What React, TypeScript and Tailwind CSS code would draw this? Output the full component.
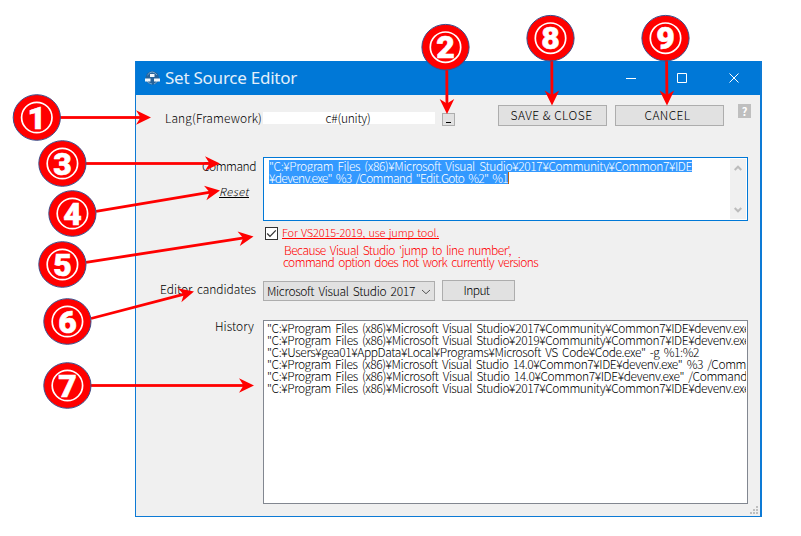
import { useLayoutEffect, useRef, useState } from "react";
import type { ReactNode } from "react";

// Single-line text whose letter spacing is adjusted to fill the given width.
function Fit({ text, width, className = "" }: { text: string; width: number; className?: string }) {
  const ref = useRef<HTMLSpanElement>(null);
  const [spacing, setSpacing] = useState(0);
  useLayoutEffect(() => {
    if (!ref.current) return;
    const natural = ref.current.getBoundingClientRect().width;
    setSpacing((width - natural) / text.length);
  }, [text, width]);
  return (
    <span ref={ref} className={`inline-block whitespace-pre ${className}`} style={{ letterSpacing: spacing }}>
      {text}
    </span>
  );
}

function PushButton({ children, className = "" }: { children: ReactNode; className?: string }) {
  return (
    <button className={`flex h-[21px] items-center justify-center border border-[#adadad] bg-[#e1e1e1] ${className}`}>
      {children}
    </button>
  );
}

const ROOT = '"C:¥Program Files (x86)¥Microsoft Visual Studio';

const history = [
  { text: `${ROOT}¥2017¥Community¥Common7¥IDE¥devenv.exe`, width: 483 },
  { text: `${ROOT}¥2019¥Community¥Common7¥IDE¥devenv.exe`, width: 483 },
  { text: '"C:¥Users¥gea01¥AppData¥Local¥Programs¥Microsoft VS Code¥Code.exe" -g %1:%2', width: 432 },
  { text: `${ROOT} 14.0¥Common7¥IDE¥devenv.exe" %3 /Comm`, width: 479 },
  { text: `${ROOT} 14.0¥Common7¥IDE¥devenv.exe" /Command`, width: 480 },
  { text: `${ROOT}¥2017¥Community¥Common7¥IDE¥devenv.exe`, width: 483 },
];

const callouts = [
  { n: 1, cx: 36.8, cy: 117.5, from: [60, 117.5], to: [151, 117.5] },
  { n: 2, cx: 445.5, cy: 47.2, from: [446.8, 70], to: [447, 114] },
  { n: 3, cx: 62.4, cy: 163.5, from: [86, 163.5], to: [220, 163.5] },
  { n: 4, cx: 72.4, cy: 213.5, from: [96, 211.3], to: [220, 190.5] },
  { n: 5, cx: 62.4, cy: 264.5, from: [86, 262.3], to: [253.5, 236.5] },
  { n: 6, cx: 67.4, cy: 321.5, from: [91, 318.5], to: [194, 291.5] },
  { n: 7, cx: 67.4, cy: 385.5, from: [91, 385.5], to: [254, 385.5] },
  { n: 8, cx: 550.5, cy: 38.2, from: [551.8, 60], to: [552, 105.5] },
  { n: 9, cx: 665.5, cy: 38.2, from: [666.6, 60], to: [667, 105.5] },
];

function Callouts() {
  return (
    <svg className="pointer-events-none absolute inset-0" width="801" height="536" viewBox="0 0 801 536">
      {callouts.map(({ n, cx, cy, from, to }) => {
        const dx = to[0] - from[0];
        const dy = to[1] - from[1];
        const length = Math.hypot(dx, dy);
        const angle = (Math.atan2(dy, dx) * 180) / Math.PI;
        return (
          <g key={n}>
            <g transform={`translate(${from[0]} ${from[1]}) rotate(${angle})`} fill="#f00">
              <rect x="0" y="-1.4" width={length - 8} height="2.8" />
              <path d={`M${length} 0l-15 -7.3l4.5 7.3l-4.5 7.3z`} />
            </g>
            <ellipse cx={cx} cy={cy} rx="23.6" ry="22.8" fill="#f00" stroke="#3a4f8c" strokeWidth="1" />
            <circle cx={cx} cy={cy} r="15.2" fill="none" stroke="#fff" strokeWidth="1.7" />
            <text
              x={cx}
              y={cy + 11.2}
              textAnchor="middle"
              fill="#fff"
              stroke="#fff"
              strokeWidth="0.6"
              className="font-['Roboto','Liberation_Sans',sans-serif] text-[32px] font-black"
            >
              {n}
            </text>
          </g>
        );
      })}
    </svg>
  );
}

export default function App() {
  return (
    <div className="relative h-[536px] w-[801px] overflow-hidden bg-white pl-[135px] pt-[61px] font-['Noto_Sans_CJK_JP',sans-serif] text-[12px] font-light leading-[12px] text-black">
      <div className="flex h-[456px] w-[627px] flex-col border-b border-l border-r-2 border-[#0d7ad5] bg-[#f0f0f0]">
        <header className="flex h-[34px] shrink-0 items-center bg-[#0078d7] pl-2 text-white">
          <svg width="17" height="16" viewBox="0 0 17 16">
            <circle cx="8.3" cy="8" r="6.8" fill="#26639b" />
            <path d="M3.5 5Q8 -1 13 5M2 9Q3 13.5 8 14M14 9Q13 13 10 14" fill="none" stroke="#78a8cd" />
            <path d="M6 4h4.5v3H6zM1 8.5h5.5v3H1zM10 8.5h6v3h-6z" fill="#f2f8fc" />
          </svg>
          <h1 className="ml-1 font-['Noto_Sans',sans-serif] text-[17px] font-normal leading-[24px] text-[#e3effa]">
            <Fit text="Set Source Editor" width={132} />
          </h1>
          <svg className="ml-auto mr-[19px]" width="116" height="12" viewBox="0 0 116 12" fill="none" stroke="#fff">
            <path d="M1 6.5h10M52.5 1.5h9v9h-9zM104.5 1.5l9 9M113.5 1.5l-9 9" />
          </svg>
        </header>

        <div className="flex h-[62px] shrink-0 items-start pt-[9px]">
          <div className="mt-[8px] w-[127px] pl-[29px]">
            <Fit text="Lang(Framework)" width={97} />
          </div>
          <div className="mt-2 flex h-3 w-[172px] justify-center bg-white pr-[2px]">
            <Fit text="c#(unity)" width={45} />
          </div>
          <button className="ml-[7px] mt-[9px] flex h-[13px] w-[13px] items-end justify-center border border-[#adadad] bg-[#e1e1e1] pb-[2px]">
            <span className="h-px w-[5px] bg-black" />
          </button>
          <PushButton className="ml-[43px] mt-px w-[109px] pb-[2px] pr-[2px]">
            <Fit text="SAVE & CLOSE" width={82} />
          </PushButton>
          <PushButton className="ml-2 mt-px w-[109px] pb-[2px] pr-1">
            <Fit text="CANCEL" width={46} />
          </PushButton>
          <span className="ml-[14px] flex h-[14px] w-[13px] items-center justify-center bg-[#bfbfbf] text-[11px] font-bold text-white">
            ?
          </span>
        </div>

        <div className="flex h-[70px] shrink-0">
          <div className="flex w-[127px] flex-col items-end pt-[3px]">
            <Fit text="Command" width={54} className="mr-[7px]" />
            <a className="mr-[14px] mt-[14px] h-[12px] border-b border-black text-[11px] italic leading-[11px]">
              <Fit text="Reset" width={30} />
            </a>
          </div>
          <div className="flex h-[64px] w-[485px] border border-[#0078d7] bg-white">
            <div className="flex flex-1 flex-col items-start pl-[5px] pt-[2px] text-white">
              <span className="flex h-3 bg-[#3399ff]">
                <Fit className="[word-spacing:2px]" text={`${ROOT}¥2017¥Community¥Common7¥IDE`} width={423} />
              </span>
              <span className="flex h-3 border-r border-[#b86010] bg-[#3399ff]">
                <Fit className="[word-spacing:2px]" text={'¥devenv.exe" %3 /Command "Edit.Goto %2" %1'} width={239} />
              </span>
            </div>
            <div className="mr-px mt-px flex h-[60px] w-4 flex-col items-center justify-between bg-[#f0f0f0] py-[6px]">
              <svg width="8" height="6" viewBox="0 0 8 6" fill="none" stroke="#bcbcbc" strokeWidth="2">
                <path d="M.7 5L4 1.7L7.3 5" />
              </svg>
              <svg width="8" height="6" viewBox="0 0 8 6" fill="none" stroke="#bcbcbc" strokeWidth="2">
                <path d="M.7 1L4 4.3L7.3 1" />
              </svg>
            </div>
          </div>
        </div>

        <div className="flex h-[17px] shrink-0 pl-[129px]">
          <span className="flex h-[13px] w-[13px] items-center justify-center border border-[#333] bg-white">
            <svg width="11" height="11" viewBox="0 0 11 11" fill="none" stroke="#333" strokeWidth="1.3">
              <path d="M1.2 5.5L4 8.4L9.8 2.4" />
            </svg>
          </span>
          <span className="ml-[4px] h-3 border-b border-[#f00] text-[11px] leading-[11px] text-[#f00]">
            <Fit className="[word-spacing:1px]" text="For VS2015-2019, use jump tool." width={157} />
          </span>
        </div>
        <div className="flex h-[36px] shrink-0 flex-col items-start pl-[147px] text-[#f00]">
          <Fit className="ml-px [word-spacing:2px]" text="Because Visual Studio 'jump to line number'," width={227} />
          <Fit className="[word-spacing:2px]" text="command option does not work currently versions" width={255} />
        </div>

        <div className="flex h-[40px] shrink-0 items-start">
          <div className="mt-[3px] flex w-[127px] justify-end pr-[7px]">
            <Fit text="Editor candidates" width={96} className="[word-spacing:2px]" />
          </div>
          <div className="mt-px flex h-[20px] w-[172px] items-center border border-[#adadad] bg-[#e1e1e1] pl-[3px]">
            <Fit className="[word-spacing:2px]" text="Microsoft Visual Studio 2017" width={148} />
            <svg className="ml-[6px] mt-[2px]" width="10" height="6" viewBox="0 0 10 6" fill="none" stroke="#555">
              <path d="M1 1L5 4.7L9 1" />
            </svg>
          </div>
          <PushButton className="ml-[7px] w-[73px] pb-[2px] pr-1">
            <Fit text="Input" width={26} />
          </PushButton>
        </div>

        <div className="flex shrink-0">
          <div className="flex w-[127px] justify-end pr-[9px]">
            <Fit text="History" width={39} />
          </div>
          <div className="flex h-[184px] w-[485px] flex-col items-start overflow-hidden border border-[#828790] bg-white pl-[3px] pr-px pt-px">
            <div className="flex w-[479px] flex-col items-start overflow-hidden pb-1">
              {history.map((row, i) => (
                <Fit key={i} className="[word-spacing:2px]" text={row.text} width={row.width} />
              ))}
            </div>
          </div>
        </div>
        <svg className="ml-auto mr-[2px] mt-[2px] shrink-0" width="8" height="8" viewBox="0 0 8 8" fill="#bfbfbf">
          <path d="M6 0h2v2H6zM3 3h2v2H3zM6 3h2v2H6zM0 6h2v2H0zM3 6h2v2H3zM6 6h2v2H6z" />
        </svg>
      </div>
      <Callouts />
    </div>
  );
}
